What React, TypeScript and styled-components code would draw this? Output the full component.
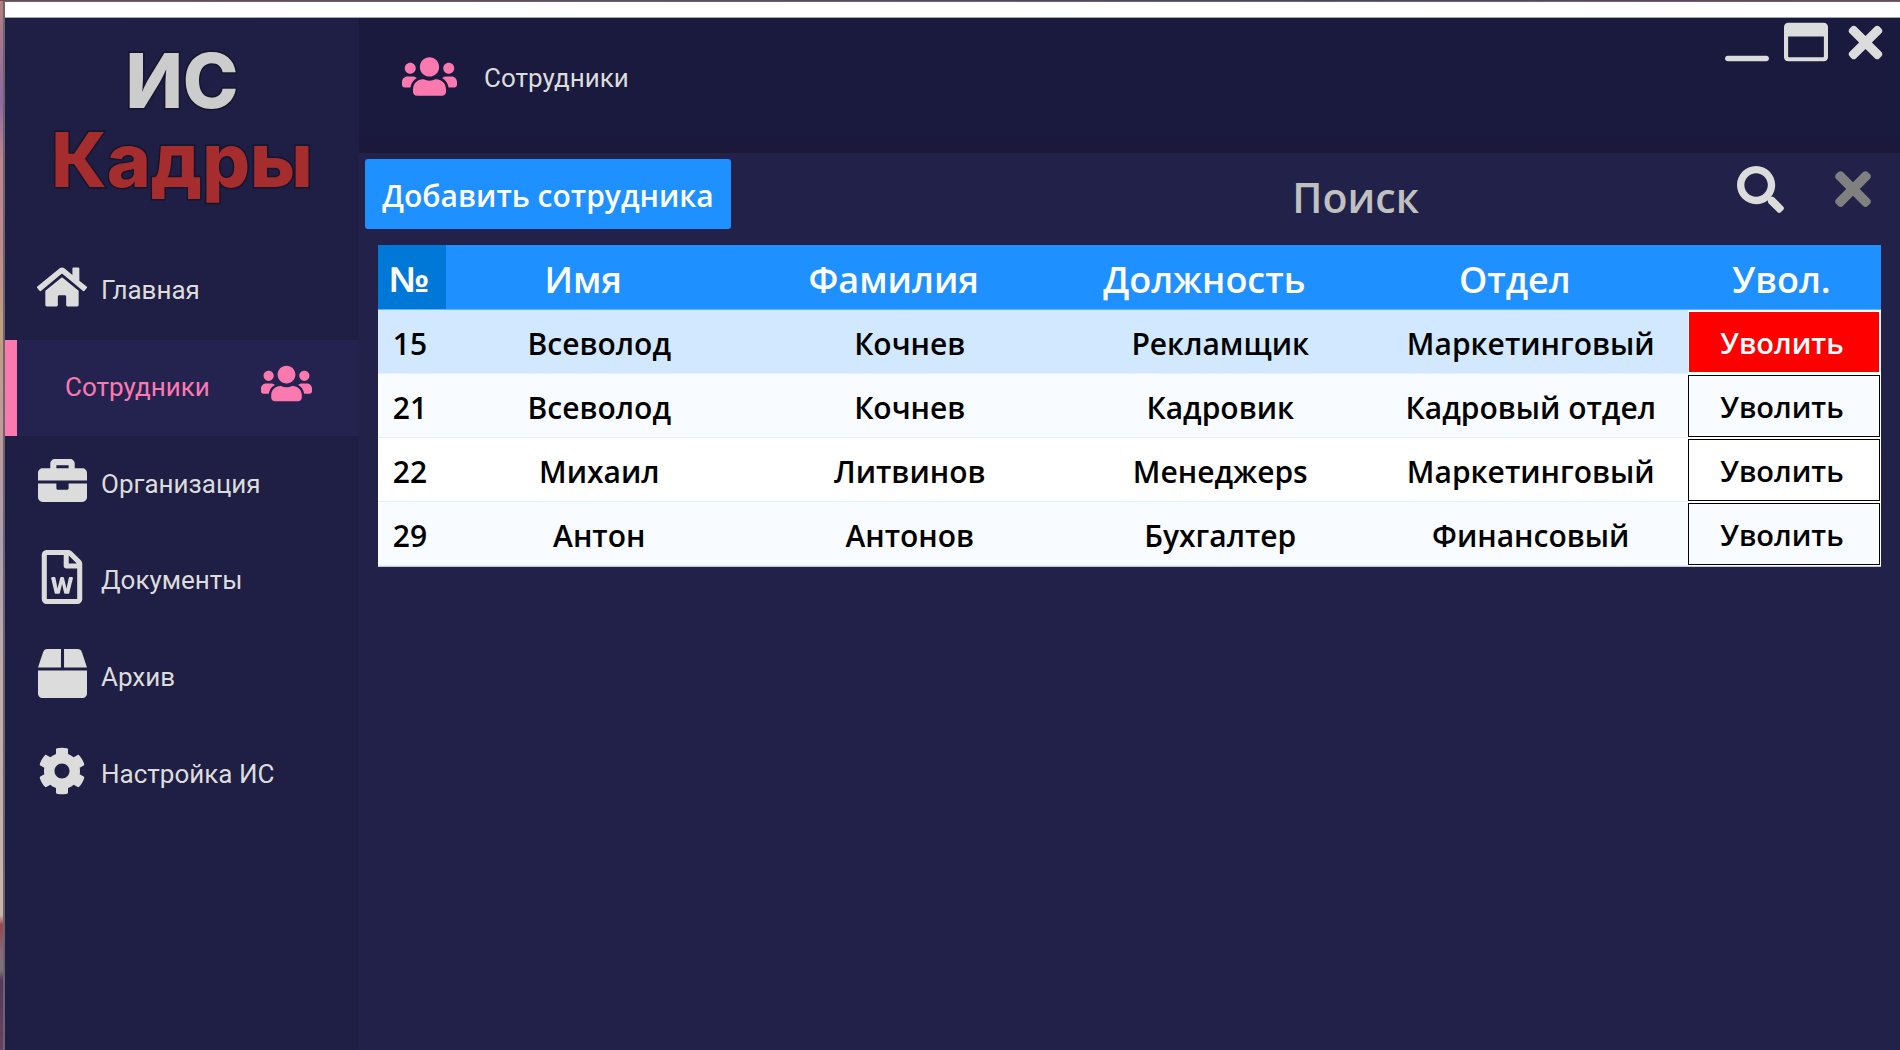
import React from "react";
import styled, { createGlobalStyle } from "styled-components";
import type { IconType } from "react-icons";
import {
  FaHome,
  FaUsers,
  FaBriefcase,
  FaRegFileWord,
  FaBox,
  FaCog,
  FaRegWindowMaximize,
  FaTimes,
  FaSearch,
} from "react-icons/fa";
import { FaWindowMinimize } from "react-icons/fa6";

const GlobalStyle = createGlobalStyle`
  *, *::before, *::after { box-sizing: border-box; }
  body { margin: 0; }
  button, input { font: inherit; margin: 0; }
`;

const uiFont = `"Open Sans", "Noto Sans", sans-serif`;
const navFont = `Roboto, "Liberation Sans", sans-serif`;
const light = "#dcdcdc";
const pink = "#fc79b0";
const blue = "#1e90ff";

/* A sliver of the desktop wallpaper shows above and to the left of the window. */
const Desktop = styled.div`
  min-height: 100vh;
  display: flex;
  padding: 1px 0 0 3px;
  background:
    linear-gradient(90deg, #6f4a58, #5a4a66 40%, #4a4568 70%, #74455c) top / 100% 1px no-repeat,
    linear-gradient(180deg, #b5807f 0, #8e6aa3 100px, #bd8590 160px, #c08b8f 240px, #bf9f80 330px,
      #c29a98 420px, #b09fb4 540px, #bfaeaa 680px, #cbb6ad 915px, #99444c 925px, #8c6678 950px,
      #7d7480 970px, #54385c 980px, #6b4160 1050px);
`;

const Window = styled.div`
  flex: 1;
  min-width: 0;
  display: flex;
  flex-direction: column;
  border: solid #6a646c;
  border-width: 1px 0 0 2px;
  background: #22214a;
`;

const TitleStrip = styled.div`
  height: 16px;
  background: #ffffff;
  border-bottom: 1px solid #a7a6b4;
`;

const Body = styled.div`
  flex: 1;
  display: flex;
`;

const Sidebar = styled.aside`
  flex: 0 0 354px;
  display: flex;
  flex-direction: column;
  background: #1f1e44;
`;

const Logo = styled.h1`
  margin: 0;
  height: 225px;
  padding-top: 23px;
  font: 800 75px/79px Inter, sans-serif;
  text-align: center;
  paint-order: stroke fill;
  -webkit-text-stroke: 3px #17142c;
`;

const LogoLine = styled.span<{ $color: string }>`
  display: block;
  color: ${(p) => p.$color};
`;

const Nav = styled.nav`
  height: 580px;
  display: grid;
  grid-auto-rows: 1fr;
`;

const NavLink = styled.a<{ $active?: boolean }>`
  display: flex;
  align-items: center;
  justify-content: ${(p) => (p.$active ? "space-between" : "flex-start")};
  padding: ${(p) => (p.$active ? "0 46px 2px 48px" : "0 0 2px 30px")};
  border-left: ${(p) => (p.$active ? `12px solid ${pink}` : "0")};
  background: ${(p) => (p.$active ? "#242350" : "transparent")};
  color: ${(p) => (p.$active ? pink : light)};
  font: 400 26px/32px ${navFont};
  text-decoration: none;
`;

const NavIcon = styled.span`
  width: 54px;
  padding-bottom: 6px;
  display: flex;
  justify-content: center;
`;

const NavLabel = styled.span<{ $spaced?: boolean }>`
  margin-left: ${(p) => (p.$spaced ? "12px" : "0")};
`;

const Main = styled.main`
  flex: 1;
  min-width: 0;
`;

const Header = styled.header`
  height: 135px;
  display: flex;
  align-items: flex-start;
  justify-content: space-between;
  padding: 0 13px 0 43px;
  color: ${light};
  background: linear-gradient(#1a193e 0, #1a193e 118px, #1b1838 135px);
`;

const PageTitle = styled.h2`
  margin: 0;
  height: 120px;
  display: flex;
  align-items: center;
  gap: 27px;
  font: 400 26px/32px ${navFont};

  svg {
    margin-bottom: 4px;
    color: ${pink};
  }
`;

const WindowButtons = styled.div`
  display: flex;
  align-items: center;
  gap: 15px;
`;

const IconButton = styled.button<{ $dim?: boolean }>`
  width: 44px;
  height: 48px;
  padding: 0;
  display: flex;
  align-items: center;
  justify-content: center;
  border: 0;
  background: none;
  color: ${(p) => (p.$dim ? "#808080" : light)};
  cursor: pointer;

  svg { flex: none; }
`;

const Toolbar = styled.div`
  height: 82px;
  display: flex;
  padding: 6px 25px 6px 6px;
`;

const AddButton = styled.button`
  width: 366px;
  padding: 4px 0 0;
  border: 0;
  border-radius: 3px;
  background: ${blue};
  color: #ffffff;
  font: 600 30px/40px ${uiFont};
  white-space: nowrap;
`;

const SearchInput = styled.input`
  width: 48%;
  margin-left: auto;
  padding: 6px 40px 0 0;
  border: 0;
  outline: 0;
  background: transparent;
  color: #c0c0c0;
  font: 600 41px/48px ${uiFont};
  text-align: center;

  &::placeholder { color: #c0c0c0; opacity: 1; }
`;

const SearchButtons = styled.div`
  height: 60px;
  display: flex;
  align-items: center;
  gap: 49px;
`;

const TableWrap = styled.div`
  margin: 10px 19px 0 19px;
  border-bottom: 1px solid #c9cad6;
`;

const Table = styled.table`
  width: 100%;
  table-layout: fixed;
  border-collapse: separate;
  border-spacing: 0;
  background: #ffffff;
  color: #000000;
  font: 600 30px/36px ${uiFont};
  text-align: center;
`;

const HeadCell = styled.th<{ $width?: number; $sorted?: boolean; $sortable?: boolean }>`
  width: ${(p) => (p.$width ? `${p.$width}px` : "auto")};
  height: 65px;
  padding: ${(p) => (p.$sortable ? "6px 36px 0 0" : "6px 6px 0 0")};
  border-bottom: 1px solid #63b1ff;
  background: ${(p) => (p.$sorted ? "#0078d7" : blue)};
  color: #ffffff;
  font: 600 36px/44px ${(p) => (p.$sorted ? `"Liberation Sans", sans-serif` : uiFont)};
`;

const Row = styled.tr<{ $selected?: boolean }>`
  background: ${(p) => (p.$selected ? "#d1e8ff" : "#ffffff")};

  &:nth-child(even) { background: #f8fbff; }
`;

const Cell = styled.td`
  height: 64px;
  padding: 4px 4px 0 0;
  border-bottom: 1px solid #e2f0ff;
  white-space: nowrap;
`;

const ActionCell = styled.td`
  height: 64px;
  padding: 0 1px 1px 0;
  background: #ffffff;
`;

const FireButton = styled.button<{ $selected?: boolean; $even?: boolean }>`
  display: block;
  width: 100%;
  height: 62px;
  padding: 2px 4px 0 0;
  border: 1px solid ${(p) => (p.$selected ? "#ffffff" : "#000000")};
  background: ${(p) => (p.$selected ? "#ff0000" : p.$even ? "#f8fbff" : "#ffffff")};
  color: ${(p) => (p.$selected ? "#ffffff" : "#000000")};
  font-size: 29px;
`;

type NavEntry = { label: string; icon: IconType; size: number; active?: boolean };

const navItems: NavEntry[] = [
  { label: "Главная", icon: FaHome, size: 50 },
  { label: "Сотрудники", icon: FaUsers, size: 51, active: true },
  { label: "Организация", icon: FaBriefcase, size: 49 },
  { label: "Документы", icon: FaRegFileWord, size: 54 },
  { label: "Архив", icon: FaBox, size: 49 },
  { label: "Настройка ИС", icon: FaCog, size: 48 },
];

const employees = [
  { id: 15, name: "Всеволод", surname: "Кочнев", post: "Рекламщик", dept: "Маркетинговый" },
  { id: 21, name: "Всеволод", surname: "Кочнев", post: "Кадровик", dept: "Кадровый отдел" },
  { id: 22, name: "Михаил", surname: "Литвинов", post: "Менеджерs", dept: "Маркетинговый" },
  { id: 29, name: "Антон", surname: "Антонов", post: "Бухгалтер", dept: "Финансовый" },
];

const selectedId = 15;

function NavItem({ label, icon: Icon, size, active }: NavEntry) {
  const icon = (
    <NavIcon>
      <Icon size={size} />
    </NavIcon>
  );
  return (
    <NavLink href="#" $active={active} aria-current={active ? "page" : undefined}>
      {!active && icon}
      <NavLabel $spaced={!active}>{label}</NavLabel>
      {active && icon}
    </NavLink>
  );
}

export default function App() {
  return (
    <Desktop>
      <GlobalStyle />
      <Window>
        <TitleStrip />
        <Body>
          <Sidebar>
            <Logo>
              <LogoLine $color="#cccccc">ИС</LogoLine>
              <LogoLine $color="#a52d2d">Кадры</LogoLine>
            </Logo>
            <Nav>
              {navItems.map((item) => (
                <NavItem key={item.label} {...item} />
              ))}
            </Nav>
          </Sidebar>
          <Main>
            <Header>
              <PageTitle>
                <FaUsers size={55} />
                Сотрудники
              </PageTitle>
              <WindowButtons>
                <IconButton aria-label="Свернуть">
                  <FaWindowMinimize size={44} />
                </IconButton>
                <IconButton aria-label="Развернуть">
                  <FaRegWindowMaximize size={44} />
                </IconButton>
                <IconButton aria-label="Закрыть">
                  <FaTimes size={49} />
                </IconButton>
              </WindowButtons>
            </Header>
            <Toolbar>
              <AddButton>Добавить сотрудника</AddButton>
              <SearchInput type="text" placeholder="Поиск" aria-label="Поиск" />
              <SearchButtons>
                <IconButton aria-label="Найти">
                  <FaSearch size={47} />
                </IconButton>
                <IconButton aria-label="Очистить" $dim>
                  <FaTimes size={52} />
                </IconButton>
              </SearchButtons>
            </Toolbar>
            <TableWrap>
              <Table>
                <thead>
                  <tr>
                    <HeadCell $width={68} $sorted>№</HeadCell>
                    <HeadCell $sortable>Имя</HeadCell>
                    <HeadCell $sortable>Фамилия</HeadCell>
                    <HeadCell $sortable>Должность</HeadCell>
                    <HeadCell $sortable>Отдел</HeadCell>
                    <HeadCell $width={193}>Увол.</HeadCell>
                  </tr>
                </thead>
                <tbody>
                  {employees.map((e, i) => (
                    <Row key={e.id} $selected={e.id === selectedId}>
                      <Cell>{e.id}</Cell>
                      <Cell>{e.name}</Cell>
                      <Cell>{e.surname}</Cell>
                      <Cell>{e.post}</Cell>
                      <Cell>{e.dept}</Cell>
                      <ActionCell>
                        <FireButton $selected={e.id === selectedId} $even={i % 2 === 1}>
                          Уволить
                        </FireButton>
                      </ActionCell>
                    </Row>
                  ))}
                </tbody>
              </Table>
            </TableWrap>
          </Main>
        </Body>
      </Window>
    </Desktop>
  );
}
